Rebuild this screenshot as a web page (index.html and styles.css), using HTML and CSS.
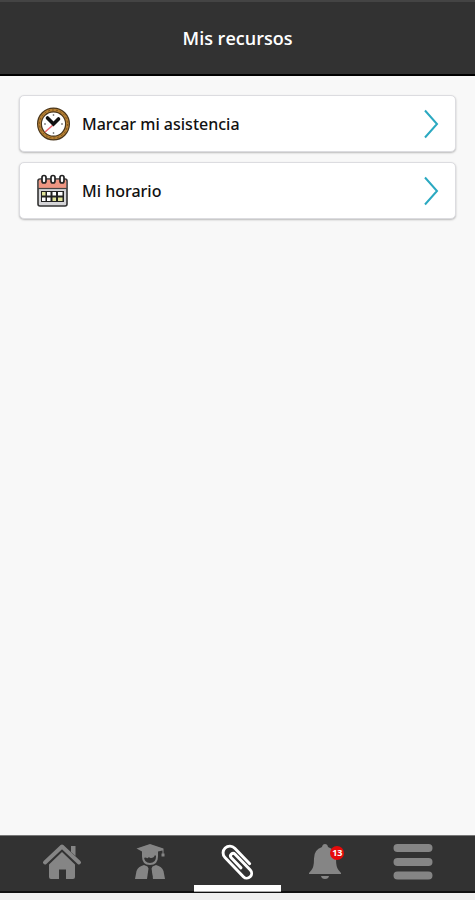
FILE: index.html
```html
<!DOCTYPE html>
<html lang="es">
<head>
  <meta charset="UTF-8" />
  <meta name="viewport" content="width=device-width, initial-scale=1.0" />
  <title>Mis recursos</title>
  <link rel="stylesheet" href="styles.css">
</head>
<body>

<header class="header">
  <h1>Mis recursos</h1>
</header>

<!-- Lista de recursos -->
<main class="recursos">
  <a class="card" href="#asistencia">
    <svg class="card-icon" viewBox="0 0 34 34" aria-hidden="true">
      <circle cx="17.500" cy="17" r="14" fill="#fff" stroke="#4b371c" stroke-width="5"/>
      <circle cx="17.500" cy="17" r="14" fill="none" stroke="#b98235" stroke-width="2.600"/>
      <circle cx="17.500" cy="17" r="14" fill="none" stroke="#7a5218" stroke-width="1" stroke-dasharray="2 2"/>
      <path d="M17.500 7v2M17.500 25v2M8 17h2M25 17h2" stroke="#888" stroke-width="1.400"/>
      <path d="M17 18l-8 7" stroke="#ef6670" stroke-width="1.600"/>
      <path d="M11.500 11l6 6 5-5" fill="none" stroke="#111" stroke-width="3.600" stroke-linecap="round"/>
    </svg>
    <span class="card-text">Marcar mi asistencia</span>
    <svg class="arrow" viewBox="0 0 16 30" aria-hidden="true"><path d="M2 1.500L14 15 2 28.500"/></svg>
  </a>
  <a class="card" href="#horario">
    <svg class="card-icon" viewBox="0 0 34 34" aria-hidden="true">
      <rect x="2" y="5" width="29" height="27" rx="2" fill="#d5d5d8" stroke="#333" stroke-width="1.600"/>
      <path d="M2.800 14V7q0-1.200 1.200-1.200h25q1.200 0 1.200 1.200v7z" fill="#ee9682"/>
      <path d="M2 14.500h29" stroke="#444" stroke-width="1.200"/>
      <rect x="5" y="17" width="23" height="11" fill="#222"/>
      <path d="M11 18h3.500v3.500H11zM16.500 18H20v3.500h-3.500zM22 18h4.500v3.500H22zM6 23.500h3.500V27H6zM11 23.500h3.500V27H11z" fill="#fff"/>
      <path d="M6 18h3.500v3.500H6zM16.500 23.500H20V27h-3.500zM22 23.500h4.500V27H22z" fill="#dfe39a"/>
      <g fill="#fff" stroke="#222" stroke-width="1.700">
        <rect x="6" y="1.500" width="4" height="7.500" rx="2"/>
        <rect x="15" y="1.500" width="4" height="7.500" rx="2"/>
        <rect x="24" y="1.500" width="4" height="7.500" rx="2"/>
      </g>
    </svg>
    <span class="card-text">Mi horario</span>
    <svg class="arrow" viewBox="0 0 16 30" aria-hidden="true"><path d="M2 1.500L14 15 2 28.500"/></svg>
  </a>
</main>

<!-- Menu inferior -->
<nav class="tabbar">
  <a class="tab" href="#inicio" aria-label="Inicio">
    <svg class="tab-icon" viewBox="0 0 40 38" aria-hidden="true">
      <path d="M3 19.500L20 3.500l17 16" fill="none" stroke="currentColor" stroke-width="4" stroke-linecap="round" stroke-linejoin="round"/>
      <path d="M29 3h4.500v10L29 9zM7 21.500L20 9l13 12.500V34q0 2-2 2h-7v-9.500h-7V36H9q-2 0-2-2z" fill="currentColor"/>
    </svg>
  </a>
  <a class="tab" href="#perfil" aria-label="Perfil">
    <svg class="tab-icon" viewBox="0 0 40 38" aria-hidden="true">
      <path d="M20 1l13.500 4.500v5h1v3h-3v-3h1V7.500L28 8.500V12q-8-3-16 0V8.500L6.500 5.500z" fill="currentColor"/>
      <path d="M13 11v2.500q0 7.500 7 7.500t7-7.500V11" fill="none" stroke="currentColor" stroke-width="2"/>
      <path d="M13 10q7-2 14 0v4l-2-2q-1 3-4 3-1.500 0-2-1-1.500 2-3 .5l-3 .5z" fill="currentColor"/>
      <path d="M14 22l3.500 1.500 1 2-1.500 10.500h6L21.500 25.500l1-2L26 22q6 1.500 7.500 6L35 36H5l1.500-8q1.500-4.500 7.500-6z" fill="currentColor"/>
      <path d="M19 23h2.500l-.5 3 1.500 8-2.200 2-2.300-2 1.500-8z" fill="#323232"/>
    </svg>
  </a>
  <a class="tab active" href="#recursos" aria-label="Mis recursos" aria-current="page">
    <svg class="tab-icon" viewBox="0 0 40 38" aria-hidden="true">
      <path transform="rotate(46 20 19)" d="M30 11H8.500a6.800 6.800 0 0 0 0 13.600H35a4.800 4.800 0 0 0 0-9.600H13a2.600 2.600 0 0 0 0 5.200h14" fill="none" stroke="currentColor" stroke-width="2.900" stroke-linecap="round"/>
    </svg>
  </a>
  <a class="tab" href="#avisos" aria-label="Avisos">
    <span class="bell">
      <svg class="tab-icon" viewBox="0 0 40 38" aria-hidden="true">
        <path d="M20 1q2.500 0 3 3 8 2.500 8 11.500 0 9 2.500 11.500L36 30v1H4v-1l2.500-3Q9 24.500 9 15.500 9 6.500 17 4q.500-3 3-3zM16 33h8q-.500 3-4 3t-4-3z" fill="currentColor"/>
      </svg>
      <span class="badge">13</span>
    </span>
  </a>
  <a class="tab" href="#menu" aria-label="Menú">
    <svg class="tab-icon" viewBox="0 0 40 38" aria-hidden="true">
      <path d="M4.500 5h31M4.500 19h31M4.500 32.500h31" stroke="currentColor" stroke-width="8" stroke-linecap="round"/>
    </svg>
  </a>
</nav>

</body>
</html>
```

FILE: styles.css
```css
* {
  box-sizing: border-box;
}

body {
  margin: 0;
  min-height: 100vh;
  display: flex;
  flex-direction: column;
  padding-bottom: 7px;
  background: #f0f0f0;
  font-family: "Noto Sans", "Open Sans", sans-serif;
}

.header {
  padding: 24px 16px;
  background: #323232;
  border-top: 2px solid #444;
  border-bottom: 2px solid #000;
  color: #fff;
  text-align: center;
}

h1 {
  margin: 0;
  font-family: "Open Sans", "Noto Sans", sans-serif;
  font-size: 18px;
  line-height: 24px;
  font-weight: 600;
}

.recursos {
  flex: 1;
  display: flex;
  flex-direction: column;
  gap: 10px;
  padding: 19px;
  background: #f8f8f8;
}

.card {
  display: flex;
  align-items: center;
  gap: 12px;
  height: 57px;
  padding: 0 16px;
  background: #fff;
  border: 1px solid #dcdce0;
  border-radius: 5px;
  box-shadow: 0 1px 2px rgba(0, 0, 0, 0.25);
  color: #111;
  text-decoration: none;
}

.card-icon {
  width: 34px;
  height: 34px;
}

.card-text {
  flex: 1;
  font-size: 16px;
  line-height: 24px;
  font-weight: 500;
}

.arrow {
  width: 16px;
  height: 30px;
}

.arrow path {
  fill: none;
  stroke: #2ba9c1;
  stroke-width: 2;
}

/* menu inferior */
.tabbar {
  display: flex;
  height: 58px;
  padding: 0 18px;
  background: #323232;
  border-top: 1px solid #777;
  border-bottom: 2px solid #111;
}

.tab {
  position: relative;
  flex: 1;
  display: flex;
  justify-content: center;
  padding-top: 7px;
  color: #858585;
}

.tab.active {
  color: #fff;
}

.tab.active::after {
  content: "";
  position: absolute;
  left: 0;
  right: 0;
  bottom: -1px;
  height: 6px;
  background: #fff;
  border-bottom: 1px solid #aaa;
}

.tab-icon {
  display: block;
  width: 40px;
  height: 38px;
}

.bell {
  position: relative;
  height: 38px;
}

.badge {
  position: absolute;
  top: 3px;
  right: 1px;
  width: 14px;
  height: 14px;
  border-radius: 50%;
  background: #e60a0a;
  color: #fff;
  font-size: 9px;
  line-height: 14px;
  font-weight: 700;
  text-align: center;
}
```
